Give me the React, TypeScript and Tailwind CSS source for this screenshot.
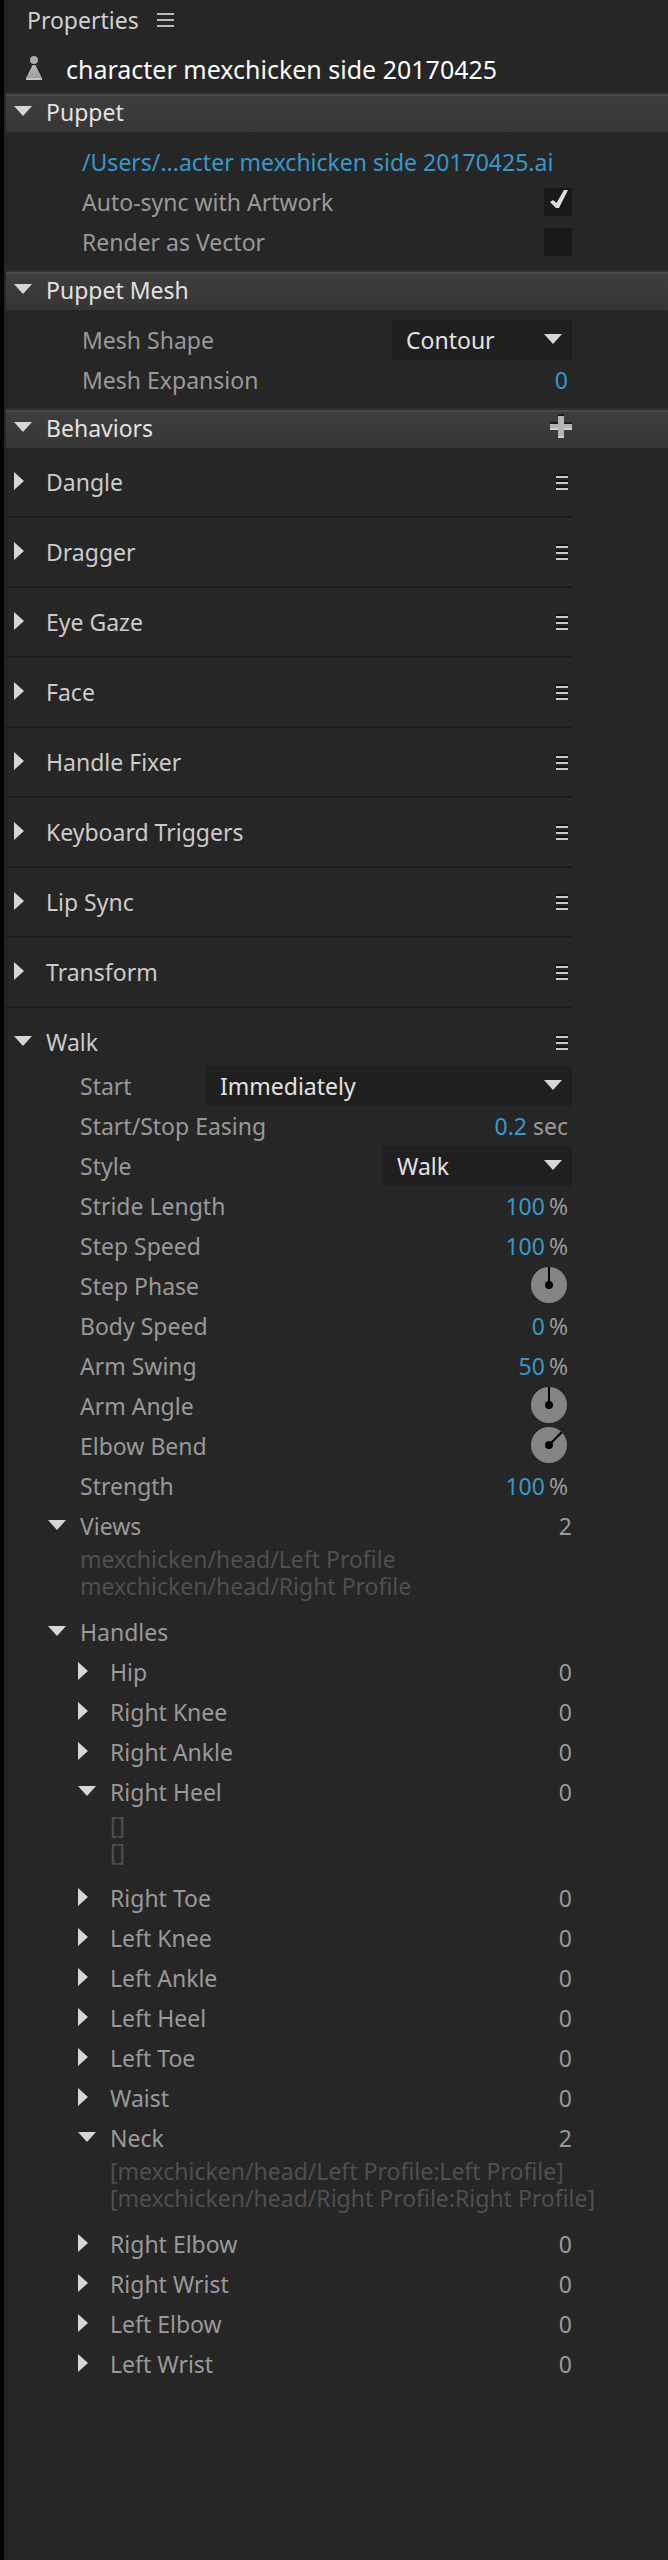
import { useState } from 'react';
import type { ReactNode } from 'react';

const behaviors = [
  'Dangle',
  'Dragger',
  'Eye Gaze',
  'Face',
  'Handle Fixer',
  'Keyboard Triggers',
  'Lip Sync',
  'Transform',
];

const handles: { name: string; count: number; items: string[]; open?: boolean }[] = [
  { name: 'Hip', count: 0, items: [] },
  { name: 'Right Knee', count: 0, items: [] },
  { name: 'Right Ankle', count: 0, items: [] },
  { name: 'Right Heel', count: 0, items: ['[]', '[]'], open: true },
  { name: 'Right Toe', count: 0, items: [] },
  { name: 'Left Knee', count: 0, items: [] },
  { name: 'Left Ankle', count: 0, items: [] },
  { name: 'Left Heel', count: 0, items: [] },
  { name: 'Left Toe', count: 0, items: [] },
  { name: 'Waist', count: 0, items: [] },
  {
    name: 'Neck',
    count: 2,
    items: [
      '[mexchicken/head/Left Profile:Left Profile]',
      '[mexchicken/head/Right Profile:Right Profile]',
    ],
    open: true,
  },
  { name: 'Right Elbow', count: 0, items: [] },
  { name: 'Right Wrist', count: 0, items: [] },
  { name: 'Left Elbow', count: 0, items: [] },
  { name: 'Left Wrist', count: 0, items: [] },
];

function Arrow({ open }: { open: boolean }) {
  return open ? (
    <svg width="18" height="12" viewBox="0 0 18 12" fill="#d6d6d6" aria-hidden="true">
      <path d="M0 0H18L9 10Z" />
    </svg>
  ) : (
    <svg width="18" height="20" viewBox="0 0 18 20" fill="#d6d6d6" aria-hidden="true">
      <path d="M0 0L10 9L0 18Z" />
    </svg>
  );
}

function Toggle({ label, open, onClick }: { label: string; open: boolean; onClick: () => void }) {
  return (
    <button type="button" aria-expanded={open} onClick={onClick} className="flex items-center gap-3.5 text-left">
      <Arrow open={open} />
      <span>{label}</span>
    </button>
  );
}

function MenuButton({ label }: { label: string }) {
  return (
    <button type="button" aria-label={label} className="mr-1">
      <svg width="12" height="16" viewBox="0 0 12 16" aria-hidden="true">
        <path d="M0 0H12V2H0ZM0 6H12V8H0ZM0 12H12V14H0Z" fill="#121212" />
        <path d="M0 2H12V4H0ZM0 8H12V10H0ZM0 14H12V16H0Z" fill="#c8c8c8" />
      </svg>
    </button>
  );
}

function Section({ title, action, children }: { title: string; action?: ReactNode; children: ReactNode }) {
  const [open, setOpen] = useState(true);

  return (
    <section>
      <h2 className="flex h-10 items-center justify-between border-t-2 border-[#303030] bg-linear-to-b from-[#3e3e3e] to-[#363636] pr-24 pb-0.5 pl-2 text-[#e2e2e2] shadow-[inset_0_2px_0_#4a4a4a]">
        <Toggle label={title} open={open} onClick={() => setOpen(!open)} />
        {action}
      </h2>
      {open && children}
    </section>
  );
}

function CheckRow({ id, label, checked }: { id: string; label: string; checked: boolean }) {
  return (
    <div className="flex h-10 items-center justify-between">
      <label htmlFor={id}>{label}</label>
      <span className="grid">
        <input
          id={id}
          type="checkbox"
          defaultChecked={checked}
          className="peer col-start-1 row-start-1 size-7 appearance-none bg-[#191919]"
        />
        <svg
          viewBox="0 0 28 28"
          fill="#dedede"
          aria-hidden="true"
          className="pointer-events-none invisible col-start-1 row-start-1 size-7 peer-checked:visible"
        >
          <path d="M6 14L9 12L12.5 15L20 2H24L15 20H12Z" />
        </svg>
      </span>
    </div>
  );
}

function SelectRow({
  id,
  label,
  options,
  labelClass,
  boxClass,
}: {
  id: string;
  label: string;
  options: string[];
  labelClass?: string;
  boxClass: string;
}) {
  return (
    <div className="flex h-10 items-center justify-between">
      <label htmlFor={id} className={labelClass}>{label}</label>
      <span className={`grid h-10 items-center bg-[#1f1f1f] ${boxClass}`}>
        <select
          id={id}
          className="col-start-1 row-start-1 h-10 w-full appearance-none bg-transparent pr-8 pl-[14px] text-[#e2e2e2]"
        >
          {options.map((o) => (
            <option key={o}>{o}</option>
          ))}
        </select>
        <span className="pointer-events-none col-start-1 row-start-1 mr-2.5 justify-self-end">
          <Arrow open />
        </span>
      </span>
    </div>
  );
}

function ValueRow({ id, label, value, unit }: { id: string; label: string; value: string; unit?: string }) {
  return (
    <div className={`flex h-10 items-center pr-1 ${unit === 'sec' ? 'gap-1.5' : 'gap-1'}`}>
      <label htmlFor={id} className="flex-1">{label}</label>
      <input id={id} type="text" defaultValue={value} className="w-20 bg-transparent text-right text-[#3798c8]" />
      {unit && <span>{unit}</span>}
    </div>
  );
}

function DialRow({ id, label, angle }: { id: string; label: string; angle: number }) {
  const [value, setValue] = useState(angle);

  return (
    <div className="relative flex h-10 items-center justify-between pr-[5px]">
      <label htmlFor={id}>{label}</label>
      <input
        id={id}
        type="range"
        min={0}
        max={360}
        value={value}
        onChange={(e) => setValue(Number(e.target.value))}
        className="sr-only"
      />
      <svg width="36" height="38" viewBox="0 0 36 38" aria-hidden="true">
        <circle cx="18" cy="18" r="18" fill="#848484" />
        <g transform={`rotate(${value} 18 18)`}>
          <path d="M18 18V0" stroke="#000" strokeWidth="2" />
        </g>
        <circle cx="18" cy="18" r="4" fill="#000" />
      </svg>
    </div>
  );
}

function TreeNode({
  label,
  count,
  items,
  defaultOpen = false,
  className,
  listClass,
}: {
  label: string;
  count: number;
  items: string[];
  defaultOpen?: boolean;
  className: string;
  listClass: string;
}) {
  const [open, setOpen] = useState(defaultOpen);

  return (
    <li>
      <div className={`flex h-10 items-center justify-between ${className}`}>
        <Toggle label={label} open={open} onClick={() => setOpen(!open)} />
        <span>{count}</span>
      </div>
      {open && items.length > 0 && (
        <ul className={`pb-3 leading-[27px] whitespace-nowrap text-[#4f4f4f] ${listClass}`}>
          {items.map((item, i) => (
            <li key={i}>{item}</li>
          ))}
        </ul>
      )}
    </li>
  );
}

function Handles() {
  const [open, setOpen] = useState(true);

  return (
    <li>
      <div className="flex h-10 items-center pl-[42px]">
        <Toggle label="Handles" open={open} onClick={() => setOpen(!open)} />
      </div>
      {open && (
        <ul>
          {handles.map((h) => (
            <TreeNode
              key={h.name}
              label={h.name}
              count={h.count}
              items={h.items}
              defaultOpen={h.open}
              className="pl-[72px]"
              listClass="pl-[104px]"
            />
          ))}
        </ul>
      )}
    </li>
  );
}

function Behavior({ name }: { name: string }) {
  const [open, setOpen] = useState(false);

  return (
    <div className="flex h-[70px] items-center justify-between border-b-2 border-[#1b1b1b] pl-2 text-[#cbcbcb]">
      <Toggle label={name} open={open} onClick={() => setOpen(!open)} />
      <MenuButton label={`${name} menu`} />
    </div>
  );
}

function Walk() {
  const [open, setOpen] = useState(true);

  return (
    <div>
      <div className="flex h-[58px] items-center justify-between pt-2.5 pl-2 text-[#cbcbcb]">
        <Toggle label="Walk" open={open} onClick={() => setOpen(!open)} />
        <MenuButton label="Walk menu" />
      </div>
      {open && (
        <>
          <div className="pl-[74px]">
            <SelectRow
              id="start"
              label="Start"
              options={['Immediately', 'With Left Arrow Key', 'With Right Arrow Key']}
              labelClass="w-[126px]"
              boxClass="flex-1"
            />
            <ValueRow id="easing" label="Start/Stop Easing" value="0.2" unit="sec" />
            <SelectRow id="style" label="Style" options={['Walk', 'Run', 'Sneak']} boxClass="w-[189px]" />
            <ValueRow id="stride" label="Stride Length" value="100" unit="%" />
            <ValueRow id="step-speed" label="Step Speed" value="100" unit="%" />
            <DialRow id="step-phase" label="Step Phase" angle={0} />
            <ValueRow id="body-speed" label="Body Speed" value="0" unit="%" />
            <ValueRow id="arm-swing" label="Arm Swing" value="50" unit="%" />
            <DialRow id="arm-angle" label="Arm Angle" angle={0} />
            <DialRow id="elbow-bend" label="Elbow Bend" angle={45} />
            <ValueRow id="strength" label="Strength" value="100" unit="%" />
          </div>
          <ul>
            <TreeNode
              label="Views"
              count={2}
              items={['mexchicken/head/Left Profile', 'mexchicken/head/Right Profile']}
              defaultOpen
              className="pl-[42px]"
              listClass="pl-[74px]"
            />
            <Handles />
          </ul>
        </>
      )}
    </div>
  );
}

export default function App() {
  return (
    <main className="min-h-screen border-l-4 border-black bg-[#262626] pl-0.5 font-['Noto_Sans',sans-serif] text-[23px] leading-8 text-[#999999]">
      <header>
        <div className="mb-2 flex h-10 items-center gap-[18px] pl-[21px] text-[#d0d0d0]">
          <h1>Properties</h1>
          <button type="button" aria-label="Panel menu">
            <svg width="17" height="14" viewBox="0 0 17 14" fill="#bababa" aria-hidden="true">
              <path d="M0 0H17V2H0ZM0 6H17V8H0ZM0 12H17V14H0Z" />
            </svg>
          </button>
        </div>
        <div className="flex h-11 items-center gap-6 pl-5 text-[25px] text-white">
          <svg width="16" height="28" viewBox="0 0 16 28" aria-hidden="true">
            <defs>
              <linearGradient id="body" x1="0" y1="0" x2="0" y2="1">
                <stop offset="0" stopColor="#b8b8b8" />
                <stop offset="1" stopColor="#9a9a9a" />
              </linearGradient>
            </defs>
            <circle cx="8" cy="2" r="4" fill="#121212" />
            <path d="M7 7H9L16 20H0Z" fill="#121212" />
            <circle cx="8" cy="4" r="4" fill="#adadad" />
            <path d="M6.5 9H9.5L16 22V24H0V22Z" fill="url(#body)" />
            <path d="M0 22H16V24H0Z" fill="#c2c2c2" />
          </svg>
          <span className="pb-0.5">character mexchicken side 20170425</span>
        </div>
      </header>

      <Section title="Puppet">
        <div className="pt-2.5 pr-24 pb-2 pl-[76px]">
          <div className="flex h-10 items-center">
            <a href="#artwork" className="whitespace-nowrap text-[#3798c8]">
              /Users/...acter mexchicken side 20170425.ai
            </a>
          </div>
          <CheckRow id="auto-sync" label="Auto-sync with Artwork" checked />
          <CheckRow id="render-vector" label="Render as Vector" checked={false} />
        </div>
      </Section>

      <Section title="Puppet Mesh">
        <div className="pt-2.5 pr-24 pb-2 pl-[76px]">
          <SelectRow
            id="mesh-shape"
            label="Mesh Shape"
            options={['Contour', 'Rectangle', 'Auto']}
            boxClass="w-[180px]"
          />
          <ValueRow id="mesh-expansion" label="Mesh Expansion" value="0" />
        </div>
      </Section>

      <Section
        title="Behaviors"
        action={
          <button type="button" aria-label="Add behavior">
            <svg width="22" height="28" viewBox="0 0 22 28" aria-hidden="true">
              <path d="M8 0H14V8H22V14H0V8H8Z" fill="#1c1c1c" />
              <path d="M8 2H14V10H22V16H14V24H8V16H0V10H8Z" fill="#b4b4b4" />
              <path d="M0 14H8V16H0ZM14 14H22V16H14ZM8 22H14V24H8Z" fill="#cfcfcf" />
            </svg>
          </button>
        }
      >
        <div className="pr-24">
          {behaviors.map((name) => (
            <Behavior key={name} name={name} />
          ))}
          <Walk />
        </div>
      </Section>
    </main>
  );
}
